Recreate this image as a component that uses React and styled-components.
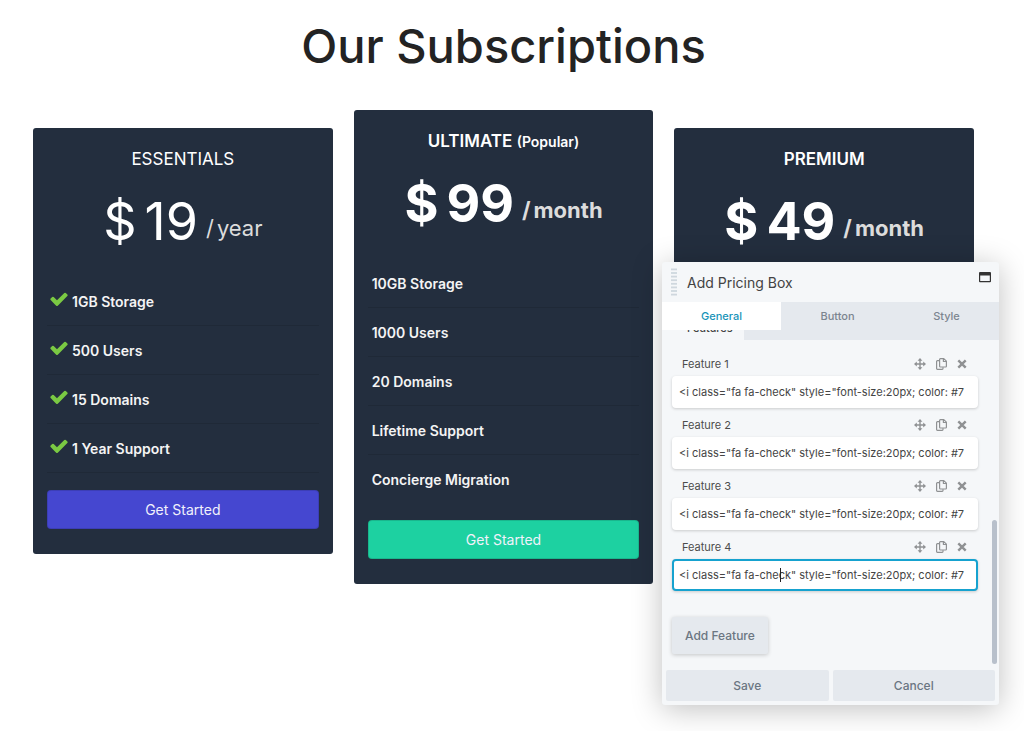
import React from "react";
import styled, { createGlobalStyle, css } from "styled-components";

const GlobalStyle = createGlobalStyle`
  * {
    box-sizing: border-box;
  }

  body {
    margin: 0;
    background: #ffffff;
    color: #232323;
    font-family: Inter, "Liberation Sans", sans-serif;
    overflow-x: hidden;
  }

  button,
  input {
    font-family: inherit;
  }
`;

const Page = styled.main`
  position: relative;
  min-height: 100vh;
  padding: 8px 50px 24px 33px;
`;

const Heading = styled.h1`
  margin: 0 0 26px;
  font-size: 47px;
  line-height: 76px;
  font-weight: 500;
  text-align: center;
`;

const Plans = styled.div`
  display: grid;
  grid-template-columns: repeat(3, 1fr);
  column-gap: 21px;
  align-items: start;
`;

const Card = styled.section`
  min-height: 426px;
  margin-top: ${props => (props.$popular ? 0 : 18)}px;
  padding: 0 14px 25px;
  border-radius: 3px;
  background: #232e3e;
  color: #ffffff;
  font-weight: ${props => (props.$bold ? 600 : 400)};
`;

const PlanName = styled.h2`
  margin: 0;
  padding-top: 17px;
  font-size: 17px;
  line-height: 28px;
  font-weight: inherit;
  text-align: center;

  small {
    font-size: 14px;
    line-height: 14px;
  }
`;

const Price = styled.p`
  display: flex;
  justify-content: center;
  align-items: center;
  gap: 8px;
  height: 96px;
  margin: 0 0 8px;
  font-size: 52px;
  font-weight: ${props => (props.$bold ? 700 : 400)};
`;

const Period = styled.span`
  display: flex;
  gap: 3px;
  margin-top: 14px;
  font-size: 22px;
  color: #dcdcdc;
`;

const FeatureList = styled.ul`
  margin: 0;
  padding: 0;
  list-style: none;
`;

const FeatureItem = styled.li`
  display: flex;
  align-items: center;
  gap: 3px;
  height: 49px;
  padding: 0 4px;
  border-bottom: 1px solid #1f2937;
  color: #f4f4f4;
  font-size: 14px;
  font-weight: 600;

  ${props =>
    props.$open &&
    css`
      &:last-child {
        height: 48px;
        border-bottom: 0;
      }
    `}
`;

const Check = styled.svg`
  width: 20px;
  height: 20px;
  margin: 0 0 4px -2px;
  fill: #7ac943;
`;

const PlanButton = styled.button`
  display: block;
  width: 100%;
  height: 39px;
  margin-top: 17px;
  border: 1px solid rgba(0, 0, 0, 0.12);
  border-radius: 4px;
  background: ${props => props.$color};
  color: #f1f1fb;
  font-size: 14px;
  cursor: pointer;
`;

const Panel = styled.form`
  position: absolute;
  top: 262px;
  right: 25px;
  display: flex;
  flex-direction: column;
  width: 337px;
  border-radius: 3px;
  background: #f5f7f9;
  box-shadow: 0 4px 30px rgba(0, 0, 0, 0.25);
`;

const PanelHeader = styled.header`
  display: flex;
  align-items: center;
  height: 40px;
  padding: 0 8px 0 9px;
`;

const Grip = styled.svg`
  width: 6px;
  height: 28px;
  margin-right: 10px;
  fill: #cfd7de;
`;

const PanelTitle = styled.h2`
  flex: 1;
  margin: 0;
  color: #434343;
  font-size: 14px;
  font-weight: 400;
`;

const WindowButton = styled.button`
  display: flex;
  align-self: flex-start;
  margin-top: 10px;
  padding: 0;
  border: 0;
  background: none;
  color: #333333;
  cursor: pointer;
`;

const Tabs = styled.div`
  display: flex;
  background: #e5e9ee;
`;

const Tab = styled.button`
  flex: ${props => props.$grow} 0 0;
  height: 28px;
  padding: 0;
  border: 0;
  background: ${props => (props.$active ? "#ffffff" : "transparent")};
  color: ${props => (props.$active ? "#1993b8" : "#7c8590")};
  font-size: 11px;
  font-weight: 500;
  cursor: pointer;
`;

const PanelBody = styled.div`
  position: relative;
  height: 336px;
  overflow: hidden;
`;

const SectionTabs = styled.div`
  height: 28px;
  margin-top: -18px;
  background: #e5e9ee;
`;

const SectionTab = styled.h3`
  width: 82px;
  height: 28px;
  margin: 0;
  padding-left: 25px;
  background: #f5f7f9;
  color: #434343;
  font-size: 11px;
  line-height: 32px;
  font-weight: 500;
`;

const Fields = styled.div`
  display: flex;
  flex-direction: column;
  align-items: flex-start;
  padding: 12px 21px 0 10px;
`;

const Field = styled.div`
  width: 100%;
  height: 61px;
`;

const FieldTop = styled.div`
  display: flex;
  align-items: center;
  gap: 10px;
  height: 24px;
  padding: 0 11px 0 10px;
`;

const FieldLabel = styled.label`
  flex: 1;
  color: #4c4c4c;
  font-size: 11px;
`;

const IconButton = styled.button`
  display: flex;
  padding: 0;
  border: 0;
  background: none;
  color: #8f9193;
  cursor: pointer;
`;

const InputWrap = styled.div`
  position: relative;
`;

const Input = styled.input`
  display: block;
  width: 100%;
  height: 32px;
  padding: 0 5px;
  border: 2px solid ${props => (props.$active ? "#16a2cf" : "#ffffff")};
  border-radius: 4px;
  outline: 0;
  background: #ffffff;
  box-shadow: 0 1px 3px rgba(0, 0, 0, 0.18);
  color: #444444;
  font-size: 11px;
`;

const Caret = styled.span`
  position: absolute;
  top: 9px;
  left: 108px;
  width: 1px;
  height: 14px;
  background: #222222;
`;

const buttonBase = css`
  border: 0;
  border-radius: 2px;
  background: #e5e9ee;
  color: #6b7682;
  font-size: 12px;
  font-weight: 500;
  cursor: pointer;
`;

const AddButton = styled.button`
  ${buttonBase}
  height: 37px;
  margin-top: 21px;
  padding: 0 13px;
  box-shadow: 0 1px 4px rgba(0, 0, 0, 0.2);
`;

const Scrollbar = styled.div`
  position: absolute;
  right: 2px;
  bottom: 2px;
  width: 5px;
  height: 144px;
  border-radius: 3px;
  background: #b8c0cb;
`;

const PanelFooter = styled.footer`
  display: flex;
  gap: 4px;
  padding: 4px;
`;

const FooterButton = styled.button`
  ${buttonBase}
  flex: 1;
  height: 31px;
`;

const CheckIcon = () => (
  <Check viewBox="0 0 1792 1792" aria-hidden="true">
    <path d="M1671 566q0 40-28 68l-724 724-136 136q-28 28-68 28t-68-28l-136-136-362-362q-28-28-28-68t28-68l136-136q28-28 68-28t68 28l294 295 656-657q28-28 68-28t68 28l136 136q28 28 28 68z" />
  </Check>
);

const MoveIcon = () => (
  <svg width="12" height="12" viewBox="0 0 12 12" fill="currentColor">
    <path d="M6 0l2.4 2.8H6.7v2.500h2.500V3.600L12 6 9.200 8.400V6.700H6.700v2.500h1.700L6 12 3.600 9.200h1.700V6.700H2.800v1.700L0 6l2.800-2.400v1.700h2.500V2.800H3.600z" />
  </svg>
);

const CopyIcon = () => (
  <svg
    width="11"
    height="12"
    viewBox="0 0 11 12"
    fill="none"
    stroke="currentColor"
    strokeWidth="1.2"
    strokeLinejoin="round"
  >
    <path d="M4.400.600h3.400l2.600 2.600v5q0 .8-.8.8H4.400q-.8 0-.8-.8V1.400q0-.8.8-.8zM7.400.800v2.700h2.800" />
    <path d="M3.400 2.600H1.400q-.8 0-.8.8v7.200q0 .8.800.8h4.800q.8 0 .8-.8V9.200" />
  </svg>
);

const CloseIcon = () => (
  <svg
    width="10"
    height="10"
    viewBox="0 0 10 10"
    fill="none"
    stroke="currentColor"
    strokeWidth="2.4"
  >
    <path d="M1.300 1.300l7.400 7.400M8.700 1.300l-7.400 7.400" />
  </svg>
);

const WindowIcon = () => (
  <svg width="12" height="11" viewBox="0 0 12 11" fill="currentColor">
    <path
      fillRule="evenodd"
      d="M1 0h10q1 0 1 1v8.200q0 1-1 1H1q-1 0-1-1V1q0-1 1-1zM1.200 3.500v5.500h9.600V3.500z"
    />
  </svg>
);

const plans = [
  {
    name: "ESSENTIALS",
    price: "19",
    period: "year",
    checked: true,
    color: "#4547d0",
    features: ["1GB Storage", "500 Users", "15 Domains", "1 Year Support"]
  },
  {
    name: "ULTIMATE",
    note: "(Popular)",
    price: "99",
    period: "month",
    bold: true,
    color: "#1dd1a1",
    features: [
      "10GB Storage",
      "1000 Users",
      "20 Domains",
      "Lifetime Support",
      "Concierge Migration"
    ]
  },
  { name: "PREMIUM", price: "49", period: "month", bold: true, features: [] }
];

const Plan = ({ plan }) => (
  <Card $popular={!!plan.note} $bold={plan.bold}>
    <PlanName>
      {plan.name} {plan.note && <small>{plan.note}</small>}
    </PlanName>
    <Price $bold={plan.bold}>
      <span>$</span>
      <span>{plan.price}</span>
      <Period>
        <span>/</span>
        <span>{plan.period}</span>
      </Period>
    </Price>
    {plan.features.length > 0 && (
      <>
        <FeatureList>
          {plan.features.map(feature => (
            <FeatureItem key={feature} $open={!plan.checked}>
              {plan.checked && <CheckIcon />}
              {feature}
            </FeatureItem>
          ))}
        </FeatureList>
        <PlanButton type="button" $color={plan.color}>
          Get Started
        </PlanButton>
      </>
    )}
  </Card>
);

const FeatureField = ({ number, active }) => (
  <Field>
    <FieldTop>
      <FieldLabel htmlFor={`feature-${number}`}>Feature {number}</FieldLabel>
      <IconButton type="button" aria-label="Move">
        <MoveIcon />
      </IconButton>
      <IconButton type="button" aria-label="Duplicate">
        <CopyIcon />
      </IconButton>
      <IconButton type="button" aria-label="Remove">
        <CloseIcon />
      </IconButton>
    </FieldTop>
    <InputWrap>
      <Input
        id={`feature-${number}`}
        type="text"
        $active={active}
        defaultValue={'<i class="fa fa-check" style="font-size:20px; color: #7'}
      />
      {active && <Caret />}
    </InputWrap>
  </Field>
);

export default () => (
  <>
    <GlobalStyle />
    <Page>
      <Heading>Our Subscriptions</Heading>
      <Plans>
        {plans.map(plan => (
          <Plan key={plan.name} plan={plan} />
        ))}
      </Plans>
      <Panel onSubmit={event => event.preventDefault()}>
        <PanelHeader>
          <Grip viewBox="0 0 6 28" aria-hidden="true">
            {[0, 1, 2, 3, 4, 5, 6, 7].map(line => (
              <rect key={line} y={line * 3.6 + 0.5} width="6" height="1.8" />
            ))}
          </Grip>
          <PanelTitle>Add Pricing Box</PanelTitle>
          <WindowButton type="button" aria-label="Toggle window size">
            <WindowIcon />
          </WindowButton>
        </PanelHeader>
        <Tabs>
          <Tab type="button" $grow={119} $active>
            General
          </Tab>
          <Tab type="button" $grow={113}>
            Button
          </Tab>
          <Tab type="button" $grow={105}>
            Style
          </Tab>
        </Tabs>
        <PanelBody>
          <SectionTabs>
            <SectionTab>Features</SectionTab>
          </SectionTabs>
          <Fields>
            {[1, 2, 3, 4].map(number => (
              <FeatureField key={number} number={number} active={number === 4} />
            ))}
            <AddButton type="button">Add Feature</AddButton>
          </Fields>
          <Scrollbar />
        </PanelBody>
        <PanelFooter>
          <FooterButton type="submit">Save</FooterButton>
          <FooterButton type="button">Cancel</FooterButton>
        </PanelFooter>
      </Panel>
    </Page>
  </>
);
